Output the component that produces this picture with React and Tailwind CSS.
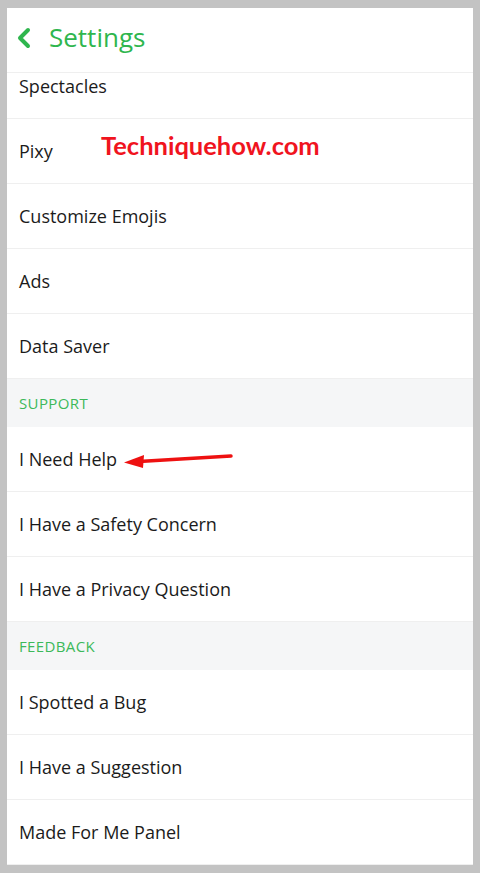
import React from 'react';

const font = { fontFamily: '"Open Sans", "Noto Sans", sans-serif' };

const Row = ({ label }) => (
  <div className="flex h-[65px] items-center border-b border-[#efefef] px-[12px]">
    <span className="text-[18px] text-[#1b1b1b]">{label}</span>
  </div>
);

const Section = ({ title }) => (
  <div className="flex h-[48px] items-center bg-[#f5f6f7] px-[12px]">
    <span className="text-[15px] tracking-wide text-[#3cb95a]">{title}</span>
  </div>
);

export default function App() {
  return (
    <div className="min-h-screen bg-[#c3c3c3] pb-[8px] pl-[7px] pr-[7px] pt-[8px]" style={font}>
      <div className="relative overflow-hidden bg-white">
        <header className="flex h-[65px] items-center gap-[17px] border-b border-[#efefef] pb-[5px] pl-[9px]">
          <svg width="16" height="22" viewBox="0 0 16 22">
            <path d="M12 3 L4 11 L12 19" fill="none" stroke="#2fb64e" strokeWidth="4" strokeLinecap="round" strokeLinejoin="round" />
          </svg>
          <h1 className="text-[26px] text-[#2fb64e]">Settings</h1>
        </header>

        <div className="h-[792px] overflow-hidden">
          <div className="-mt-[19px]">
            <Row label="Spectacles" />
            <Row label="Pixy" />
            <Row label="Customize Emojis" />
            <Row label="Ads" />
            <Row label="Data Saver" />
            <Section title="SUPPORT" />
            <Row label="I Need Help" />
            <Row label="I Have a Safety Concern" />
            <Row label="I Have a Privacy Question" />
            <Section title="FEEDBACK" />
            <Row label="I Spotted a Bug" />
            <Row label="I Have a Suggestion" />
            <Row label="Made For Me Panel" />
          </div>
        </div>

        <span
          className="absolute left-[94px] top-[125px] text-[25.5px] font-bold leading-none text-[#f0141e]"
          style={{ fontFamily: 'Lato, sans-serif' }}
        >
          Techniquehow.com
        </span>

        <svg className="absolute left-0 top-0" width="466" height="600" viewBox="0 0 466 600">
          <path d="M224 448 L132 453.5" stroke="#ee1111" strokeWidth="3.5" strokeLinecap="round" />
          <path d="M117 454.5 L137 447 L136 460 Z" fill="#ee1111" />
        </svg>
      </div>
    </div>
  );
}
